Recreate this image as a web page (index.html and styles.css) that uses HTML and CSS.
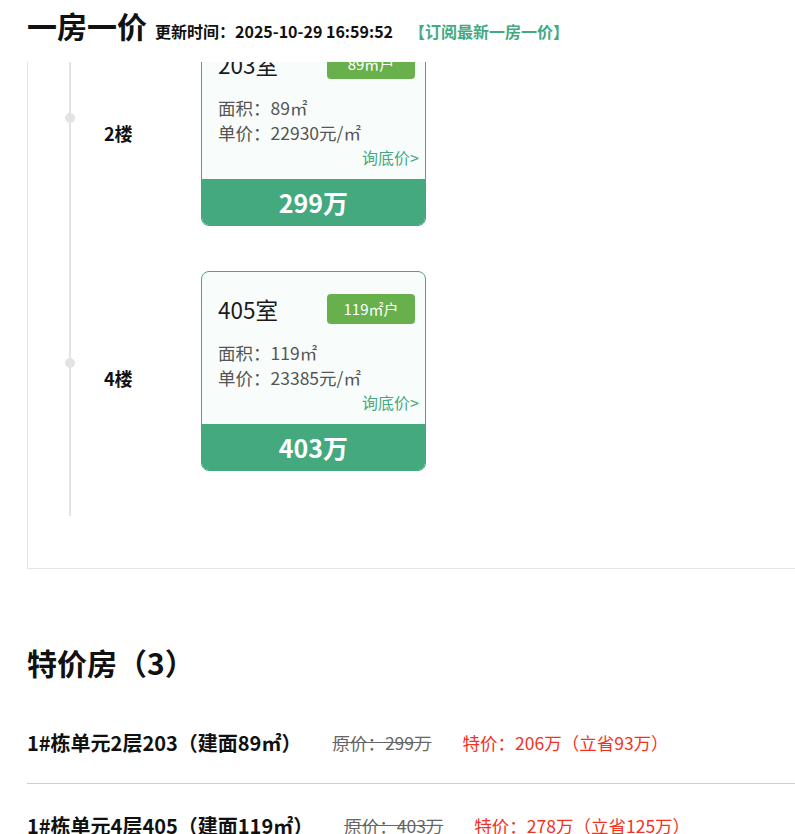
FILE: index.html
```html
<!DOCTYPE html>
<html lang="zh-CN">
<head>
<meta charset="utf-8">
<title>一房一价</title>
<link rel="stylesheet" href="styles.css">
</head>
<body>
<header class="topbar">
  <h1 class="topbar-title">一房一价</h1>
  <span class="topbar-time">更新时间：2025-10-29 16:59:52</span>
  <a class="topbar-sub" href="#">【订阅最新一房一价】</a>
</header>

<main class="page">
  <section class="box">
    <div class="timeline">
      <div class="floor">
        <span class="dot"></span>
        <div class="floor-label">2楼</div>
        <div class="card">
          <div class="card-top">
            <span class="room">203室</span>
            <span class="badge">89㎡户</span>
          </div>
          <div class="info">
            <div>面积：89㎡</div>
            <div>单价：22930元/㎡</div>
          </div>
          <div class="ask">询底价&gt;</div>
          <div class="price">299万</div>
        </div>
      </div>
      <div class="floor">
        <span class="dot"></span>
        <div class="floor-label">4楼</div>
        <div class="card">
          <div class="card-top">
            <span class="room">405室</span>
            <span class="badge">119㎡户</span>
          </div>
          <div class="info">
            <div>面积：119㎡</div>
            <div>单价：23385元/㎡</div>
          </div>
          <div class="ask">询底价&gt;</div>
          <div class="price">403万</div>
        </div>
      </div>
    </div>
  </section>

  <section class="special">
    <h2 class="special-title">特价房（3）</h2>
    <div class="row">
      <span class="row-name">1#栋单元2层203（建面89㎡）</span>
      <span class="row-old">原价：299万</span>
      <span class="row-new">特价：206万（立省93万）</span>
    </div>
    <div class="row">
      <span class="row-name">1#栋单元4层405（建面119㎡）</span>
      <span class="row-old">原价：403万</span>
      <span class="row-new">特价：278万（立省125万）</span>
    </div>
    <div class="row">
      <span class="row-name">1#栋单元5层505（建面119㎡）</span>
      <span class="row-old">原价：410万</span>
      <span class="row-new">特价：285万（立省125万）</span>
    </div>
  </section>
</main>
</body>
</html>
```

FILE: styles.css
```css
html, body {
  margin: 0;
  padding: 0;
  overflow: hidden;
  background: #fff;
}
body {
  font-family: "Noto Sans CJK SC", "Noto Sans", sans-serif;
  color: #111;
}

.topbar {
  position: fixed;
  top: 0;
  left: 0;
  right: 0;
  height: 62px;
  box-sizing: border-box;
  padding: 5px 0 0 27px;
  background: #fff;
  display: flex;
  align-items: baseline;
  z-index: 10;
}
.topbar-title {
  margin: 0;
  font-size: 30px;
  line-height: 40px;
  font-weight: 700;
  color: #111;
}
.topbar-time {
  margin-left: 8px;
  font-size: 16px;
  font-weight: 700;
  color: #111;
}
.topbar-sub {
  margin-left: 16px;
  font-size: 16px;
  font-weight: 700;
  color: #45a97f;
  text-decoration: none;
}

.page {
  padding-left: 27px;
}

.box {
  margin-top: -20px;
  margin-right: -200px;
  border: 1px solid #e5e5e5;
  border-right: none;
  padding-bottom: 52px;
}

.timeline {
  position: relative;
  display: flex;
  flex-direction: column;
  gap: 45px;
  padding: 45px 0 45px 76px;
}
.timeline::before {
  content: "";
  position: absolute;
  left: 41px;
  top: 0;
  bottom: 0;
  width: 2px;
  background: #e3e3e3;
}

.floor {
  position: relative;
  display: flex;
  align-items: center;
  height: 200px;
}
.dot {
  position: absolute;
  left: -39px;
  top: 87px;
  width: 10px;
  height: 10px;
  border-radius: 50%;
  background: #e3e3e3;
}
.floor-label {
  width: 97px;
  margin-top: 14px;
  font-size: 18px;
  line-height: 26px;
  font-weight: 700;
  color: #111;
}

.card {
  width: 225px;
  height: 200px;
  box-sizing: border-box;
  border: 1px solid #45a97f;
  border-radius: 8px;
  background: #f8fdfb;
  display: flex;
  flex-direction: column;
  overflow: hidden;
}
.card-top {
  display: flex;
  justify-content: space-between;
  align-items: center;
  padding: 21px 10px 0 16px;
}
.room {
  font-size: 22.5px;
  line-height: 32px;
  color: #1a1a1a;
}
.badge {
  width: 88px;
  height: 30px;
  border-radius: 4px;
  background: #67b04b;
  color: #fff;
  font-size: 15px;
  line-height: 30px;
  text-align: center;
}
.info {
  margin-top: 15px;
  padding-left: 16px;
  font-size: 17.5px;
  line-height: 25px;
  color: #555;
}
.ask {
  padding-right: 6px;
  text-align: right;
  font-size: 16px;
  line-height: 25px;
  color: #45a97f;
}
.price {
  margin-top: auto;
  height: 46px;
  background: #45a97f;
  color: #fff;
  font-size: 25px;
  line-height: 46px;
  font-weight: 700;
  text-align: center;
}

.special {
  margin-top: 73px;
  margin-right: -200px;
}
.special-title {
  margin: 0 0 19px;
  font-size: 30px;
  line-height: 40px;
  font-weight: 700;
  color: #111;
}
.row {
  display: flex;
  align-items: center;
  height: 82px;
}
.row + .row {
  height: 83px;
  border-top: 1px solid #cfcfcf;
}
.row-name {
  font-size: 20px;
  font-weight: 700;
  color: #111;
}
.row-old {
  margin-left: 31px;
  font-size: 17.5px;
  color: #666;
  text-decoration: line-through;
}
.row-new {
  margin-left: 31px;
  font-size: 17.5px;
  color: #f5301e;
}
```
